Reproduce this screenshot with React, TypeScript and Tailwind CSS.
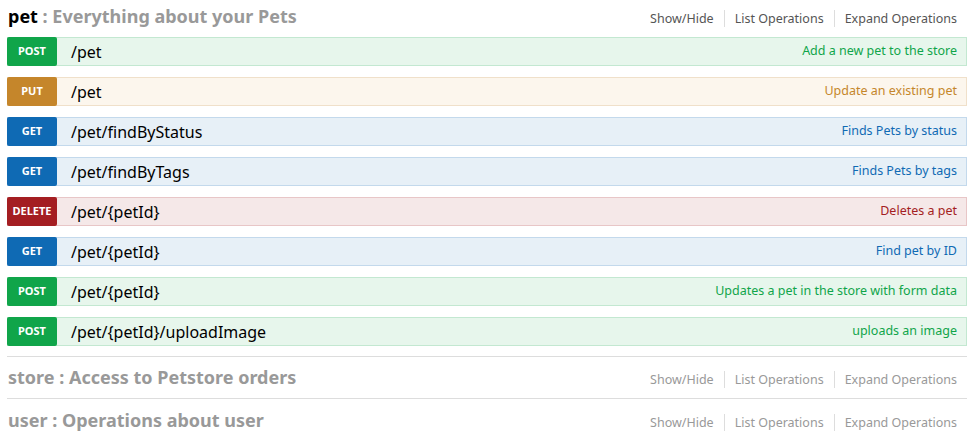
import React from "react";

type Method = "post" | "put" | "get" | "delete";

const styles: Record<Method, { badge: string; box: string; text: string }> = {
  post: { badge: "bg-[#10a54a]", box: "bg-[#e7f6ec] border-[#c3e8d1]", text: "text-[#10a54a]" },
  put: { badge: "bg-[#c5862b]", box: "bg-[#fcf6ed] border-[#f0e0ca]", text: "text-[#c5862b]" },
  get: { badge: "bg-[#0f6ab4]", box: "bg-[#e7f0f7] border-[#c3d9ec]", text: "text-[#0f6ab4]" },
  delete: { badge: "bg-[#a41e22]", box: "bg-[#f5e8e8] border-[#e8c6c7]", text: "text-[#a41e22]" },
};

const ops: { m: Method; path: string; desc: string }[] = [
  { m: "post", path: "/pet", desc: "Add a new pet to the store" },
  { m: "put", path: "/pet", desc: "Update an existing pet" },
  { m: "get", path: "/pet/findByStatus", desc: "Finds Pets by status" },
  { m: "get", path: "/pet/findByTags", desc: "Finds Pets by tags" },
  { m: "delete", path: "/pet/{petId}", desc: "Deletes a pet" },
  { m: "get", path: "/pet/{petId}", desc: "Find pet by ID" },
  { m: "post", path: "/pet/{petId}", desc: "Updates a pet in the store with form data" },
  { m: "post", path: "/pet/{petId}/uploadImage", desc: "uploads an image" },
];

function Options({ dark }: { dark?: boolean }) {
  const c = dark ? "text-[#555]" : "text-[#999]";
  return (
    <ul className={`flex items-center text-[12.5px] ${c} pr-[10px] mt-[4px]`}>
      <li className="px-[10px] border-r border-[#ddd] leading-[17px]">Show/Hide</li>
      <li className="px-[10px] border-r border-[#ddd] leading-[17px]">List Operations</li>
      <li className="pl-[10px] leading-[17px]">Expand Operations</li>
    </ul>
  );
}

export default function App() {
  return (
    <div
      className="w-[975px] h-[439px] bg-white px-[7px] overflow-hidden"
      style={{ fontFamily: '"Noto Sans", "Open Sans", sans-serif' }}
    >
      <div className="w-[960px]">
        <div className="border-b border-[#ddd] pb-[10px]">
          <div className="h-[32px] flex items-center justify-between">
            <h2 className="text-[18px] font-bold text-[#999] pl-px">
              <span className="text-black">pet</span> : Everything about your Pets
            </h2>
            <Options dark />
          </div>
          <div className="mt-[5px] flex flex-col gap-[11px]">
            {ops.map((o, i) => {
              const s = styles[o.m];
              return (
                <div key={i} className={`h-[29px] border ${s.box} flex items-center`}>
                  <span
                    className={`${s.badge} -ml-px -my-px w-[50px] h-[29px] rounded-[2px] flex items-center justify-center text-white text-[11px] font-bold uppercase`}
                  >
                    {o.m}
                  </span>
                  <span className="ml-[14px] text-[16px] text-black flex-1">{o.path}</span>
                  <span className={`${s.text} text-[12.5px] pr-[9px]`}>{o.desc}</span>
                </div>
              );
            })}
          </div>
        </div>
        <div className="h-[42px] border-b border-[#ddd] flex items-center justify-between">
          <h2 className="text-[18px] font-bold text-[#999] pl-px">store : Access to Petstore orders</h2>
          <Options />
        </div>
        <div className="h-[42px] flex items-center justify-between">
          <h2 className="text-[18px] font-bold text-[#999] pl-px">user : Operations about user</h2>
          <Options />
        </div>
      </div>
    </div>
  );
}
